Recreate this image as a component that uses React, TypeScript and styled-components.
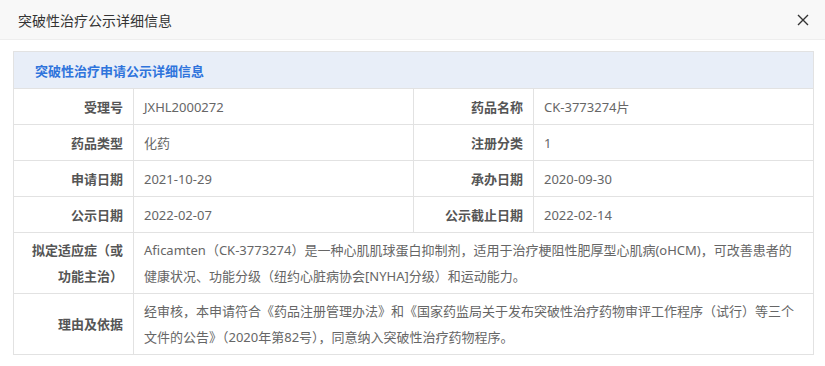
import React from "react";
import styled, { createGlobalStyle } from "styled-components";

const Global = createGlobalStyle`
  html, body { margin: 0; padding: 0; background: #fff; }
  body { font-family: "Noto Sans", "Noto Sans CJK SC", sans-serif; }
`;

const Dialog = styled.div`
  width: 825px;
  height: 366px;
  background: #fff;
  display: flex;
  flex-direction: column;
`;

const Header = styled.div`
  height: 40px;
  box-sizing: border-box;
  background: #f8f8f8;
  border-bottom: 1px solid #eee;
  display: flex;
  align-items: center;
  justify-content: space-between;
  padding: 0 16px 0 18px;
`;

const Title = styled.div`
  font-size: 14px;
  color: #333;
  font-family: "Noto Sans CJK SC", sans-serif;
`;

const Close = styled.button`
  border: 0;
  background: none;
  padding: 0;
  width: 12px;
  height: 12px;
  display: flex;
  cursor: pointer;
`;

const Body = styled.div`
  padding: 11px 12px 0 13px;
`;

const Table = styled.table`
  width: 800px;
  border-collapse: collapse;
  table-layout: fixed;
  font-family: "Noto Sans", "Noto Sans CJK SC", sans-serif;
  font-size: 13px;
`;

const Caption = styled.th`
  height: 36px;
  background: #e8eef8;
  border: 1px solid #e2e2e2;
  text-align: left;
  padding: 0 0 0 21px;
  color: #2f74dc;
  font-weight: bold;
  font-size: 13px;
`;

const Label = styled.th<{ $tall?: boolean }>`
  border: 1px solid #e2e2e2;
  text-align: right;
  padding: ${(p) => (p.$tall ? "4px 10px" : "0 10px")};
  height: ${(p) => (p.$tall ? "52px" : "35px")};
  line-height: 26px;
  color: #555;
  font-weight: bold;
  vertical-align: middle;
`;

const Value = styled.td<{ $tall?: boolean }>`
  border: 1px solid #e2e2e2;
  text-align: left;
  padding: ${(p) => (p.$tall ? "4px 10px" : "0 10px")};
  line-height: 26px;
  color: #666;
  vertical-align: middle;
`;

const rows: [string, string, string, string][] = [
  ["受理号", "JXHL2000272", "药品名称", "CK-3773274片"],
  ["药品类型", "化药", "注册分类", "1"],
  ["申请日期", "2021-10-29", "承办日期", "2020-09-30"],
  ["公示日期", "2022-02-07", "公示截止日期", "2022-02-14"],
];

export default function App() {
  return (
    <>
      <Global />
      <Dialog>
        <Header>
          <Title>突破性治疗公示详细信息</Title>
          <Close aria-label="关闭">
            <svg width="12" height="12" viewBox="0 0 12 12">
              <path d="M1 1L11 11M11 1L1 11" stroke="#333" strokeWidth="1.4" fill="none" />
            </svg>
          </Close>
        </Header>
        <Body>
          <Table>
            <colgroup>
              <col style={{ width: 120 }} />
              <col style={{ width: 280 }} />
              <col style={{ width: 120 }} />
              <col style={{ width: 280 }} />
            </colgroup>
            <thead>
              <tr>
                <Caption colSpan={4}>突破性治疗申请公示详细信息</Caption>
              </tr>
            </thead>
            <tbody>
              {rows.map((r) => (
                <tr key={r[0]}>
                  <Label>{r[0]}</Label>
                  <Value>{r[1]}</Value>
                  <Label>{r[2]}</Label>
                  <Value>{r[3]}</Value>
                </tr>
              ))}
              <tr>
                <Label $tall>拟定适应症（或功能主治）</Label>
                <Value $tall colSpan={3}>
                  Aficamten（CK-3773274）是一种心肌肌球蛋白抑制剂，适用于治疗梗阻性肥厚型心肌病(oHCM)，可改善患者的健康状况、功能分级（纽约心脏病协会[NYHA]分级）和运动能力。
                </Value>
              </tr>
              <tr>
                <Label $tall>理由及依据</Label>
                <Value $tall colSpan={3}>
                  经审核，本申请符合《药品注册管理办法》和《国家药监局关于发布突破性治疗药物审评工作程序（试行）等三个文件的公告》（2020年第82号），同意纳入突破性治疗药物程序。
                </Value>
              </tr>
            </tbody>
          </Table>
        </Body>
      </Dialog>
    </>
  );
}
